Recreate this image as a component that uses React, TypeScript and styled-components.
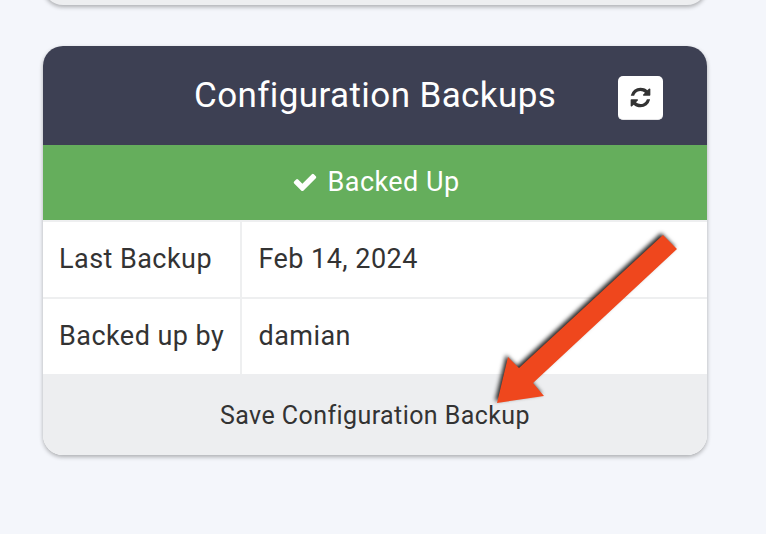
import styled, { createGlobalStyle } from 'styled-components'

const GlobalStyle = createGlobalStyle`
  html, body {
    margin: 0;
    padding: 0;
    background: #f4f6fb;
    overflow: hidden;
  }
  body {
    font-family: Roboto, "Liberation Sans", sans-serif;
    color: #333;
  }
`

const Page = styled.div`
  position: relative;
  width: 766px;
  height: 534px;
  padding: 0 59px 0 43px;
  box-sizing: border-box;
  overflow: hidden;
`

const Card = styled.section`
  border-radius: 20px;
  box-shadow: 0 2px 4px rgba(0, 0, 0, 0.3);
  overflow: hidden;
  background: #fff;
`

const PrevCard = styled(Card)`
  height: 40px;
  margin-top: -35px;
  margin-bottom: 41px;
  background: #edeef0;
`

const Header = styled.header`
  display: grid;
  grid-template-columns: 1fr auto;
  align-items: center;
  box-sizing: border-box;
  height: 99px;
  padding: 0 44px 0 151px;
  background: #3d4053;
  color: #fff;
`

const Title = styled.h2`
  margin: 0 0 1px;
  font-size: 35px;
  font-weight: 400;
  letter-spacing: 0.4px;
`

const RefreshButton = styled.button`
  display: flex;
  align-items: center;
  justify-content: center;
  width: 45px;
  height: 44px;
  margin-top: 5px;
  padding: 0;
  border: 0;
  border-bottom: 1px solid #e4e4e6;
  border-radius: 5px;
  background: #fff;
  color: #333;
`

const Status = styled.div`
  display: flex;
  align-items: center;
  justify-content: center;
  gap: 9px;
  height: 75px;
  padding: 0 0 2px 2px;
  box-sizing: border-box;
  background: #65ae5c;
  color: #fff;
  font-size: 27px;
  letter-spacing: 0.45px;
`

const InfoTable = styled.div`
  display: grid;
  grid-template-columns: 199px 1fr;
`

const Cell = styled.div<{ $label?: boolean }>`
  display: flex;
  align-items: center;
  height: 77px;
  box-sizing: border-box;
  padding-left: ${(p) => (p.$label ? '16px' : '16.5px')};
  padding-bottom: 2px;
  border-top: 2px solid #eeeff0;
  border-right: ${(p) => (p.$label ? '2px solid #eeeff0' : '0')};
  font-size: 27px;
  letter-spacing: 0.45px;
`

const SaveButton = styled.button`
  display: block;
  width: 100%;
  height: 81px;
  padding: 2px 0 0;
  border: 0;
  background: #edeef0;
  color: #333;
  font: inherit;
  font-size: 25px;
  letter-spacing: 0.42px;
`

const Arrow = styled.svg`
  position: absolute;
  top: 0;
  left: 0;
  filter: drop-shadow(-2px -2px 2px rgba(0, 0, 0, 0.85));
`

const CheckIcon = () => (
  <svg width="26" height="26" viewBox="0 0 1792 1792" fill="currentColor">
    <path d="M1671 566q0 40-28 68l-724 724-136 136q-28 28-68 28t-68-28l-136-136-362-362q-28-28-28-68t28-68l136-136q28-28 68-28t68 28l294 295 656-657q28-28 68-28t68 28l136 136q28 28 28 68z" />
  </svg>
)

const RefreshIcon = () => (
  <svg width="23" height="23" viewBox="0 0 1792 1792" fill="currentColor">
    <path d="M1639 1056q0 5-1 7-64 268-268 434.5t-478 166.5q-146 0-282.5-55t-243.5-157l-129 129q-19 19-45 19t-45-19-19-45v-448q0-26 19-45t45-19h448q26 0 45 19t19 45-19 45l-137 137q71 66 161 102t187 36q134 0 250-65t186-179q11-17 53-117 8-23 30-23h192q13 0 22.5 9.5t9.5 22.5zm25-800v448q0 26-19 45t-45 19h-448q-26 0-45-19t-19-45 19-45l138-138q-148-137-349-137-134 0-250 65t-186 179q-11 17-53 117-8 23-30 23h-199q-13 0-22.5-9.5t-9.5-22.5v-7q65-268 270-434.5t480-166.5q146 0 284 55.5t245 156.5l130-129q19-19 45-19t45 19 19 45z" />
  </svg>
)

export default function App() {
  return (
    <>
      <GlobalStyle />
      <Page>
        <PrevCard />
        <Card>
          <Header>
            <Title>Configuration Backups</Title>
            <RefreshButton aria-label="Refresh">
              <RefreshIcon />
            </RefreshButton>
          </Header>
          <Status>
            <CheckIcon />
            Backed Up
          </Status>
          <InfoTable>
            <Cell $label>Last Backup</Cell>
            <Cell>Feb 14, 2024</Cell>
            <Cell $label>Backed up by</Cell>
            <Cell>damian</Cell>
          </InfoTable>
          <SaveButton>Save Configuration Backup</SaveButton>
        </Card>
        <Arrow width="766" height="534" viewBox="0 0 766 534">
          <polygon
            points="663,235 677,249 533,383 544,396 497,403 508,357 519,368"
            fill="#ef471d"
          />
        </Arrow>
      </Page>
    </>
  )
}
